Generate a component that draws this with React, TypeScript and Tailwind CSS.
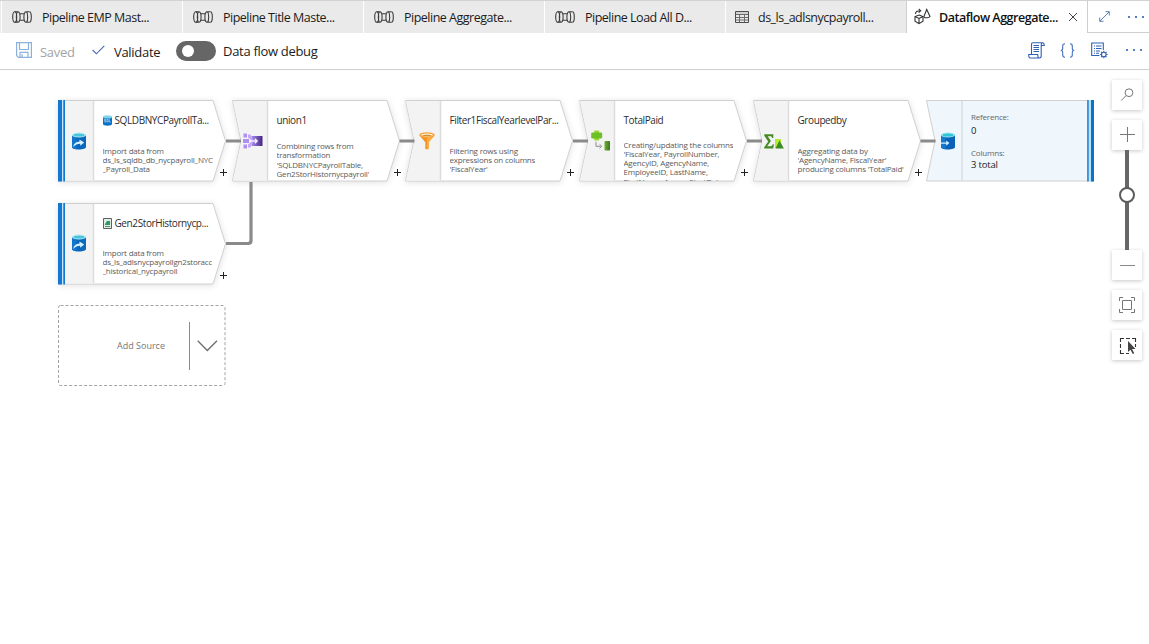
import type { ReactNode } from "react";

function PipelineIcon() {
  return (
    <svg width="20" height="12" viewBox="0 0 20 12" fill="none" stroke="#3b3b3b" strokeWidth="1.1">
      <ellipse cx="2.7" cy="6" rx="2" ry="5.3" />
      <path d="M2.7.7h3c1.4 0 2.4 2.300 2.400 5.300s-1 5.300-2.400 5.300h-3M5.500.7c-1 1-1.200 3-1.200 5.300s.2 4.300 1.200 5.300M8.100 2.700h3.800M8.100 9.300h3.800M17.300.7h-3c-1.400 0-2.400 2.300-2.400 5.300s1 5.300 2.400 5.300h3M14.500.7c1 1 1.200 3 1.200 5.300s-.2 4.300-1.200 5.300" />
      <path d="M17.300.7c1.200 0 2 2.300 2 5.300s-.8 5.300-2 5.300" />
    </svg>
  );
}

function TableIcon() {
  return (
    <svg width="14" height="12" viewBox="0 0 14 12" fill="none" stroke="#6a6a6a">
      <path d="M.5 3.500h13M.5 6.500h13M.5 9h13M4.500 3.500v8M9.500 3.500v8" />
      <path d="M.5.5h13v11H.5z" stroke="#4c4c4c" />
      <path d="M1 2h12" stroke="#b5b5b5" />
    </svg>
  );
}

function DataflowIcon() {
  return (
    <svg className="mb-px" width="17" height="17" viewBox="0 0 17 17" fill="none" stroke="#333" strokeWidth="1.100">
      <path d="M5 7l4 1.600v4.700l-4 2.400-4-2.400V8.600zM1 8.600l4 1.900 4-1.900M5 10.500v5" />
      <path d="M12.700 1.500L9.800 8.800c1.400 1.500 5.200 1.300 6.200-.3zM1.500 6c0-2.300 1.500-3.300 5-3.300M4.700.8l2 1.900-2 1.900" />
    </svg>
  );
}

const tabs = [
  { label: "Pipeline EMP Mast...", icon: "pipeline" },
  { label: "Pipeline Title Maste...", icon: "pipeline" },
  { label: "Pipeline Aggregate...", icon: "pipeline" },
  { label: "Pipeline Load All D...", icon: "pipeline" },
  { label: "ds_ls_adlsnycpayroll...", icon: "table" },
];

function Dots() {
  return (
    <svg width="18" height="4" viewBox="0 0 18 4" fill="#2f5fb0">
      <circle cx="2" cy="2" r="1.100" />
      <circle cx="9" cy="2" r="1.100" />
      <circle cx="16" cy="2" r="1.100" />
    </svg>
  );
}

function TabBar() {
  return (
    <div className="flex h-[33px] border-t border-[#d2d2d2] bg-[#eaeaea] pl-px text-[12.500px] tracking-[-0.5px] text-[#1c1c1c]">
      {tabs.map((tab) => (
        <div key={tab.label} className="flex w-[181px] shrink-0 items-center border-l border-white">
          <div className={tab.icon === "table" ? "ml-[9px] mr-[9px]" : "ml-[10px] mr-[10px]"}>
            {tab.icon === "table" ? <TableIcon /> : <PipelineIcon />}
          </div>
          <span className="whitespace-nowrap pt-[3px]">{tab.label}</span>
        </div>
      ))}
      <div className="flex w-[182px] shrink-0 items-center border-x border-[#cfcfcf] bg-white pl-[7px]">
        <DataflowIcon />
        <span className="ml-[8px] w-[121px] whitespace-nowrap pt-[3px] text-[12.500px] font-semibold tracking-[-0.48px] text-[#111]">
          Dataflow Aggregate...
        </span>
        <svg className="ml-[8px]" width="10" height="10" viewBox="0 0 10 10" stroke="#444" fill="none">
          <path d="M1 1l8 8M9 1L1 9" />
        </svg>
      </div>
      <div className="flex flex-1 items-center border-b border-[#cfcfcf] bg-white pl-[11px]">
        <svg width="11" height="11" viewBox="0 0 11 11" stroke="#4d71ad" strokeWidth=".9" fill="none">
          <path d="M1 10L10 1M6.500.7h3.800v3.800M.7 6.500v3.800h3.800" />
        </svg>
        <div className="ml-[17px]"><Dots /></div>
      </div>
    </div>
  );
}

function Toolbar() {
  return (
    <div className="flex h-[37px] items-center border-b border-[#cfcfcf] bg-white pl-4 text-[13px] tracking-[-0.2px] text-[#1b1b1b]">
      <svg className="mb-[2px]" width="16" height="16" viewBox="0 0 16 16" fill="none" stroke="#8cb2dc" strokeWidth="1.200">
        <path d="M.6.6h14.800v14.800H2.500L.6 13.500zM3.500.6v6.900h9V.6M4 15.400v-5h8v5M6 12v3.400" />
      </svg>
      <span className="ml-2 w-[36px] whitespace-nowrap pt-[3px] tracking-[-0.3px] text-[#a3a3a3]">Saved</span>
      <svg className="mb-[3px] ml-[16px]" width="13" height="10" viewBox="0 0 13 10" fill="none" stroke="#4a63b5" strokeWidth="1.100">
        <path d="M.6 5l3.800 3.800L12.300.8" />
      </svg>
      <span className="ml-[9px] w-[47px] whitespace-nowrap pt-[3px] tracking-[-0.3px]">Validate</span>
      <div className="ml-[15px] flex h-5 w-10 items-center rounded-full bg-[#666] pl-[6px]">
        <div className="h-3 w-3 rounded-full bg-white" />
      </div>
      <span className="ml-[7px] whitespace-nowrap pt-px tracking-[-0.3px]">Data flow debug</span>
      <div className="ml-auto flex items-center pb-[2px] pr-[6px]">
        <svg width="17" height="17" viewBox="0 0 17 17" fill="none" stroke="#2f61b5" strokeWidth="1.100">
          <path d="M3.500 12V2.500C3.500 1.300 4 .7 5 .7h9.500c1.300 0 1.700 1 1.700 2.800h-3v10.300c0 1.400-.7 2.200-1.700 2.200H2.300C1.200 16 .7 15 .7 12.500h9c0 2.300.6 3.500 1.800 3.500M13.200 3.500c0-1.800.4-2.800 1.300-2.800M5.500 3.500h5.500M5.500 5.500h5.500M5.500 7.500h5.500M5.500 9.500h5.500" />
        </svg>
        <svg className="ml-[15px]" width="15" height="15" viewBox="0 0 15 15" fill="none" stroke="#4770bd" strokeWidth="1.100">
          <path d="M5 .8C3.300.8 2.700 1.500 2.700 3v2.500c0 1.200-.6 2-1.900 2 1.300 0 1.900.8 1.900 2V12c0 1.500.6 2.200 2.300 2.200M10 .8c1.700 0 2.300.7 2.300 2.200v2.500c0 1.200.6 2 1.900 2-1.300 0-1.900.8-1.900 2V12c0 1.500-.6 2.200-2.300 2.200" />
        </svg>
        <svg className="ml-[16px]" width="17" height="17" viewBox="0 0 17 17" fill="none" stroke="#2f61b5" strokeWidth="1.100">
          <path d="M8.500 13.500H.7V1h11.600v7M3 4h1M5 4h5.500M3 6.500h1M5 6.500h5.500M3 9h1M5 9h4M3 11.300h1M5 11.300h3" />
          <circle cx="12.800" cy="12.500" r="2.300" />
          <path d="M12.800 8.700v1.400M12.800 14.900v1.400M9 12.500h1.400M15.200 12.500h1.400M10.100 9.800l1 1M14.500 14.200l1 1M10.100 15.200l1-1M14.500 10.800l1-1" />
        </svg>
        <div className="ml-[17px]"><Dots /></div>
      </div>
    </div>
  );
}

function SourceDb() {
  return (
    <svg width="14" height="18" viewBox="0 0 14 18">
      <path d="M0 3v12c0 1.500 3 2.500 7 2.500s7-1 7-2.500V3z" fill="#0b67bd" />
      <path d="M0 3v12c0 1.200 2 2.100 4.500 2.400V3z" fill="#1276cc" />
      <ellipse cx="7" cy="3" rx="7" ry="2.500" fill="#b9eaf2" />
      <ellipse cx="7" cy="3.100" rx="5.400" ry="1.500" fill="#46c5dc" />
      <path d="M1.300 15c.2-3.300 2.600-5.400 6.200-5.600V7.600l4.700 2.800-4 3.300v-1.900c-2.800 0-4.900.9-6.900 3.200z" fill="#d5f1ff" />
    </svg>
  );
}

function SinkDb() {
  return (
    <svg width="14" height="18" viewBox="0 0 14 18">
      <path d="M0 3v12c0 1.500 3 2.500 7 2.500s7-1 7-2.500V3z" fill="#0a62b8" />
      <path d="M0 3v12c0 1.200 2 2.100 4.500 2.400V3z" fill="#1478cd" />
      <ellipse cx="7" cy="3" rx="7" ry="2.500" fill="#9be5ee" />
      <ellipse cx="7" cy="3.100" rx="5.400" ry="1.500" fill="#30c5d6" />
      <path d="M0 10.500h5.200V8.500l3.200 2.600-3.200 2.600v-2H0z" fill="#d5f1ff" />
    </svg>
  );
}

function UnionGlyph() {
  return (
    <svg width="20" height="16" viewBox="0 0 20 16">
      <defs>
        <linearGradient id="unionFill" x1="0" x2="1">
          <stop offset="0" stopColor="#a98cf0" />
          <stop offset="1" stopColor="#43247f" />
        </linearGradient>
      </defs>
      <path d="M.5.500H4V4.500H.5zM.5 11.500H4v4H.5z" fill="#b08ff5" />
      <path d="M0 6h6v4H0z" fill="#b08ff5" />
      <path d="M8.500 3h11v10h-11z" fill="url(#unionFill)" />
      <path d="M5 1.500h2.500l2.500 5.200-1.300.8L5 4.500zM5 14.500h2.500L10 9.300l-1.300-.8L5 11.500z" fill="#c0a8f8" />
      <path d="M6 8h8M11.800 5.700L14.200 8l-2.400 2.300" fill="none" stroke="#f6f0ff" strokeWidth="1.300" />
    </svg>
  );
}

function FilterGlyph() {
  return (
    <svg width="16" height="18" viewBox="0 0 16 18">
      <path d="M.3 3.200l6 7v6.500c0 .8 3.400.8 3.400 0v-6.500l6-7z" fill="#f7941e" />
      <path d="M8 4l6.800.2-5.300 6.500v5.600L8 17z" fill="#ffad42" />
      <ellipse cx="8" cy="3" rx="7.700" ry="2.700" fill="#f8a43c" />
      <ellipse cx="8" cy="2.900" rx="5.900" ry="1.400" fill="#fff3dd" />
      <path d="M3 3.300c2-.9 8-.9 10 0l-1 .8H4z" fill="#d58c33" />
    </svg>
  );
}

function DeriveGlyph() {
  return (
    <svg width="20" height="21" viewBox="0 0 20 21">
      <defs>
        <linearGradient id="deriveFill" x1="0" x2="1">
          <stop offset="0" stopColor="#6cb033" />
          <stop offset="1" stopColor="#39761d" />
        </linearGradient>
      </defs>
      <path d="M3.300.5h4.800v10H3.300z" fill="#98d532" />
      <rect x=".2" y="2.500" width="11" height="6" rx="1.300" fill="#6fbf28" />
      <path d="M5 11.800v4.500h4.500M8.500 14.200l2.200 2.100-2.200 2.100" fill="none" stroke="#8a8a8a" strokeWidth="1" />
      <rect x="13.500" y="11" width="5.500" height="9.500" rx=".8" fill="url(#deriveFill)" />
    </svg>
  );
}

function AggregateGlyph() {
  return (
    <svg width="20" height="15" viewBox="0 0 20 15">
      <path d="M.3.3h9v3.600H8C7.700 2.500 7.300 2.200 6 2.200H3.700l3.200 4.700-3.700 5.300h3.200c1.400 0 1.900-.5 2.300-2h1.200L9.300 14.500H.2v-1.200l4-5.700L.3 1.700z" fill="#458b22" />
      <path d="M11 5h6v9h-6z" fill="#b4ea35" />
      <path d="M15.500 6.500l4.400 7.900h-8.500z" fill="#3d8b22" />
    </svg>
  );
}

function SqlBadge() {
  return (
    <svg width="9" height="11" viewBox="0 0 9 11">
      <path d="M0 2v7c0 1 2 1.700 4.500 1.700S9 10 9 9V2z" fill="#0872c9" />
      <ellipse cx="4.500" cy="1.900" rx="4.500" ry="1.600" fill="#7fd4ec" />
      <path d="M2.900 4.500H1.400v1.200h1.300V7H1.200M3.800 4.500h1.400V7H3.800zM6.300 4.300V7h1.500" fill="none" stroke="#cfe9fb" strokeWidth=".6" />
    </svg>
  );
}

function FileBadge() {
  return (
    <svg width="9" height="11" viewBox="0 0 9 11">
      <path d="M.5.500h8v10h-8z" fill="#e3ebe6" stroke="#56645e" />
      <path d="M2 6l2-3h3v4H2z" fill="#2c9b62" />
      <path d="M2 8.500h5" stroke="#5f8877" />
    </svg>
  );
}

type NodeProps = {
  className: string;
  kind: "source" | "transform";
  title: string;
  badge?: ReactNode;
  glyph: ReactNode;
  glyphClass: string;
  lines: string[];
  bodyClass: string;
};

function FlowNode({ className, kind, title, badge, glyph, glyphClass, lines, bodyClass }: NodeProps) {
  const source = kind === "source";
  return (
    <div className={`absolute h-[81px] w-[168px] ${className}`}>
      <svg className="absolute inset-0 overflow-visible drop-shadow-[0_1px_3px_rgba(0,0,0,0.12)]" width="168" height="81" viewBox="0 0 168 81">
        <path d={source ? "M.5.5h154.500L167.500 40.800l-12.500 40.200H.5z" : "M.5.5h154.500L167.500 40.800l-12.500 40.200H.5L9 40.800z"} fill="#fff" stroke="#d0d0d0" />
        <path d={source ? "M1 1h34.500v79.500H1z" : "M1 1h34.500v79.500H1L9.500 40.800z"} fill="#f3f3f3" />
        <path d="M35.500 1v79.500" stroke="#dcdcdc" strokeWidth="1.500" />
        {source && <path d="M0 0h7v81.500H0z" fill="#c9e7fa" />}
        {source && <path d="M0 0h4v81.500H0zM5.300 0H7v81.500H5.300z" fill="#1478cf" />}
      </svg>
      <div className={`absolute ${glyphClass}`}>{glyph}</div>
      <div className="absolute left-[44.500px] top-[12px] flex h-4 items-center gap-[3px] whitespace-nowrap text-[10px] tracking-[-0.4px] text-[#2d2d2d]">
        {badge}
        <span>{title}</span>
      </div>
      <div className={`absolute bottom-0 left-[44.500px] overflow-hidden whitespace-nowrap text-[8px] leading-[9.300px] tracking-[-0.2px] text-[#5b5b5b] ${bodyClass}`}>
        {lines.map((line) => (
          <div key={line}>{line}</div>
        ))}
      </div>
      <svg className="absolute left-[162px] top-[69px]" width="7" height="7" viewBox="0 0 7 7" stroke="#222">
        <path d="M0 3.500h7M3.500 0v7" />
      </svg>
    </div>
  );
}

function SinkNode() {
  return (
    <div className="absolute left-[926px] top-[30px] h-[81px] w-[168px]">
      <svg className="absolute inset-0 overflow-visible" width="168" height="81" viewBox="0 0 168 81">
        <path d="M.5.5H167v80.500H.5L9 40.800z" fill="#eff6fc" stroke="#d0d0d0" />
        <path d="M36 1v79.500" stroke="#d8dce0" strokeWidth="1.500" />
        <path d="M161 0h7v81.500h-7z" fill="#b4e4fb" />
        <path d="M161.300 0h1.300v81.500h-1.300zM165 0h3v81.500h-3z" fill="#0f70c8" />
      </svg>
      <div className="absolute left-[14.500px] top-[32px]"><SinkDb /></div>
      <div className="absolute left-[45px] top-[11px] whitespace-nowrap text-[8px] leading-[11px] tracking-[-0.2px] text-[#666]">
        <div>Reference:</div>
        <div className="pt-[2px] text-[9.500px] leading-[13px] text-[#222]">0</div>
        <div className="pt-[10px]">Columns:</div>
        <div className="pt-px text-[9.500px] leading-[12px] text-[#222]">3 total</div>
      </div>
    </div>
  );
}

const tile = "flex h-[30px] w-[30px] items-center justify-center bg-white shadow-[0_1px_4px_rgba(0,0,0,0.22)]";

function ZoomControls() {
  return (
    <div className="absolute left-[1112px] top-[10px] flex w-[30px] flex-col items-center">
      <div className={tile}>
        <svg width="14" height="14" viewBox="0 0 14 14" fill="none" stroke="#777">
          <circle cx="9" cy="4.700" r="3.900" />
          <path d="M6.200 7.500L1.200 12.500" />
        </svg>
      </div>
      <div className={`mt-[10px] ${tile}`}>
        <svg className="mb-[2px]" width="15" height="15" viewBox="0 0 15 15" stroke="#777"><path d="M0 7.500h15M7.500 0v15" /></svg>
      </div>
      <div className="relative h-[100px] w-1 bg-[#666]">
        <div className="absolute -left-[6px] top-[37px] h-4 w-4 rounded-full border-2 border-[#5c5c5c] bg-white" />
      </div>
      <div className={tile}>
        <svg width="15" height="15" viewBox="0 0 15 15" stroke="#888"><path d="M0 7.500h15" /></svg>
      </div>
      <div className={`mt-[10px] ${tile}`}>
        <svg className="mb-px" width="16" height="16" viewBox="0 0 16 16" fill="none" stroke="#777">
          <path d="M3.500 3.500h9v9h-9zM.5 4V.5H4M12 .5h3.500V4M15.500 12v3.500H12M4 15.500H.5V12" />
        </svg>
      </div>
      <div className={`mt-[10px] ${tile}`}>
        <svg className="ml-[2px] mt-px" width="18" height="18" viewBox="0 0 18 18" fill="none" stroke="#333" strokeWidth="1.100">
          <path d="M1.500 5V1.500H5M7 1.500h4M13 1.500h3.500V5M16.500 7v3M1.500 7v4M1.500 13v3.500H5M7 16.500h3" />
          <path d="M9 4v11l2.500-2.300 2.300 4.300 1.500-.8-2.300-4.200h3.500z" fill="#444" stroke="none" />
        </svg>
      </div>
    </div>
  );
}

export default function App() {
  return (
    <div className="flex h-[644px] w-[1149px] flex-col overflow-hidden bg-white font-['Open_Sans','Noto_Sans',sans-serif]">
      <TabBar />
      <Toolbar />
      <main className="relative flex-1 overflow-hidden">
        <FlowNode
          className="left-[58px] top-[30px]"
          kind="source"
          title="SQLDBNYCPayrollTa..."
          badge={<SqlBadge />}
          glyph={<SourceDb />}
          glyphClass="left-[14px] top-[32px]"
          lines={["Import data from", "ds_ls_sqldb_db_nycpayroll_NYC", "_Payroll_Data"]}
          bodyClass="top-[45.500px]"
        />
        <FlowNode
          className="left-[58px] top-[133px]"
          kind="source"
          title="Gen2StorHistornycp..."
          badge={<FileBadge />}
          glyph={<SourceDb />}
          glyphClass="left-[14px] top-[31px]"
          lines={["Import data from", "ds_ls_adlsnycpayrollgn2storacc", "_historical_nycpayroll"]}
          bodyClass="top-[44.500px]"
        />
        <FlowNode
          className="left-[232px] top-[30px]"
          kind="transform"
          title="union1"
          glyph={<UnionGlyph />}
          glyphClass="left-[11px] top-[33px]"
          lines={["Combining rows from", "transformation", "'SQLDBNYCPayrollTable,", "Gen2StorHistornycpayroll'"]}
          bodyClass="top-[41px]"
        />
        <FlowNode
          className="left-[405px] top-[30px]"
          kind="transform"
          title="Filter1FiscalYearlevelPar..."
          glyph={<FilterGlyph />}
          glyphClass="left-[13.500px] top-[32px]"
          lines={["Filtering rows using", "expressions on columns", "'FiscalYear'"]}
          bodyClass="top-[45.500px]"
        />
        <FlowNode
          className="left-[579px] top-[30px]"
          kind="transform"
          title="TotalPaid"
          glyph={<DeriveGlyph />}
          glyphClass="left-[12px] top-[30px]"
          lines={["Creating/updating the columns", "'FiscalYear, PayrollNumber,", "AgencyID, AgencyName,", "EmployeeID, LastName,", "FirstName, AgencyStartDate,"]}
          bodyClass="top-[39.600px]"
        />
        <FlowNode
          className="left-[753px] top-[30px]"
          kind="transform"
          title="Groupedby"
          glyph={<AggregateGlyph />}
          glyphClass="left-[11px] top-[34px]"
          lines={["Aggregating data by", "'AgencyName, FiscalYear'", "producing columns 'TotalPaid'"]}
          bodyClass="top-[45.500px]"
        />
        <SinkNode />
        <svg className="pointer-events-none absolute left-0 top-0" width="1100" height="330" viewBox="0 0 1100 330" fill="none" stroke="#8a8a8a" strokeWidth="3.200">
          <path d="M226 71h15M399.500 71h15M573 71h15M747 71h15M920.500 71h15" />
          <path d="M226 173.500h22q3 0 3-3V112" />
        </svg>
        <div className="absolute left-[58px] top-[235px] flex h-[82px] w-[168px] items-center">
          <svg className="absolute inset-0" width="168" height="82" viewBox="0 0 168 82" fill="none" stroke="#a3a3a3">
            <rect x=".5" y=".5" width="166.500" height="80" rx="2" strokeDasharray="3 2" />
          </svg>
          <span className="w-[131px] whitespace-nowrap pl-[59px] text-[9px] text-[#777]">Add Source</span>
          <div className="h-12 w-px bg-[#8a8a8a]" />
          <svg className="ml-[7px]" width="21" height="12" viewBox="0 0 21 12" fill="none" stroke="#707070" strokeWidth="1.400">
            <path d="M.7.8l9.600 9.600L20 .8" />
          </svg>
        </div>
        <ZoomControls />
      </main>
    </div>
  );
}
